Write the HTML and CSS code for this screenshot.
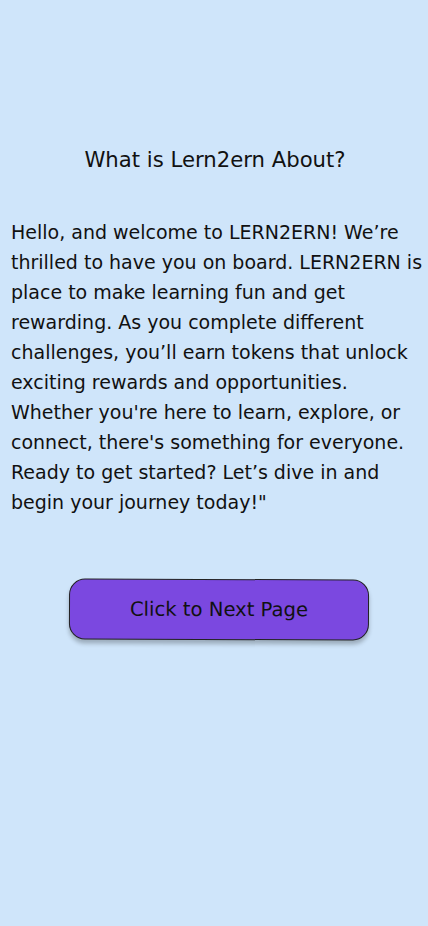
FILE: index.html
```html
<!DOCTYPE html>
<html lang="en">
<head>
<meta charset="utf-8">
<title>What is Lern2ern About?</title>
<link rel="stylesheet" href="styles.css">
</head>
<body>
<main class="page">
  <h1 class="title">What is Lern2ern About?</h1>
  <p class="intro">
    <span class="line">Hello, and welcome to LERN2ERN! We’re</span>
    <span class="line">thrilled to have you on board. LERN2ERN is</span>
    <span class="line">place to make learning fun and get</span>
    <span class="line">rewarding. As you complete different</span>
    <span class="line">challenges, you’ll earn tokens that unlock</span>
    <span class="line">exciting rewards and opportunities.</span>
    <span class="line">Whether you're here to learn, explore, or</span>
    <span class="line">connect, there's something for everyone.</span>
    <span class="line">Ready to get started? Let’s dive in and</span>
    <span class="line">begin your journey today!"</span>
  </p>
  <div class="actions">
    <button class="next-btn" type="button">Click to Next Page</button>
  </div>
</main>
</body>
</html>
```
FILE: styles.css
```css
html, body {
  margin: 0;
  padding: 0;
}
body {
  background: #cfe5fa;
  font-family: "DejaVu Sans", "Noto Sans", sans-serif;
  color: #111111;
  width: 428px;
  min-height: 926px;
}
.page {
  display: flex;
  flex-direction: column;
  padding: 145px 0 0 11px;
}
.title {
  margin: 0;
  font-size: 21.2px;
  font-weight: 400;
  line-height: 30px;
  text-align: center;
  padding-right: 11px;
  padding-left: 2px;
}
.intro {
  margin: 42px 0 0 0;
  font-size: 19px;
  line-height: 30px;
}
.line {
  display: block;
  white-space: nowrap;
}
.actions {
  display: flex;
  justify-content: flex-start;
  padding: 62px 0 0 58px;
}
.next-btn {
  width: 300px;
  height: 61px;
  background: #7b48e0;
  border: 1px solid #222222;
  border-radius: 16px;
  font-family: "DejaVu Sans", "Noto Sans", sans-serif;
  font-size: 19.6px;
  color: #111111;
  box-shadow: 0 4px 4px rgba(0, 0, 0, 0.25);
  transform: rotate(0.2deg);
  cursor: pointer;
}
```
